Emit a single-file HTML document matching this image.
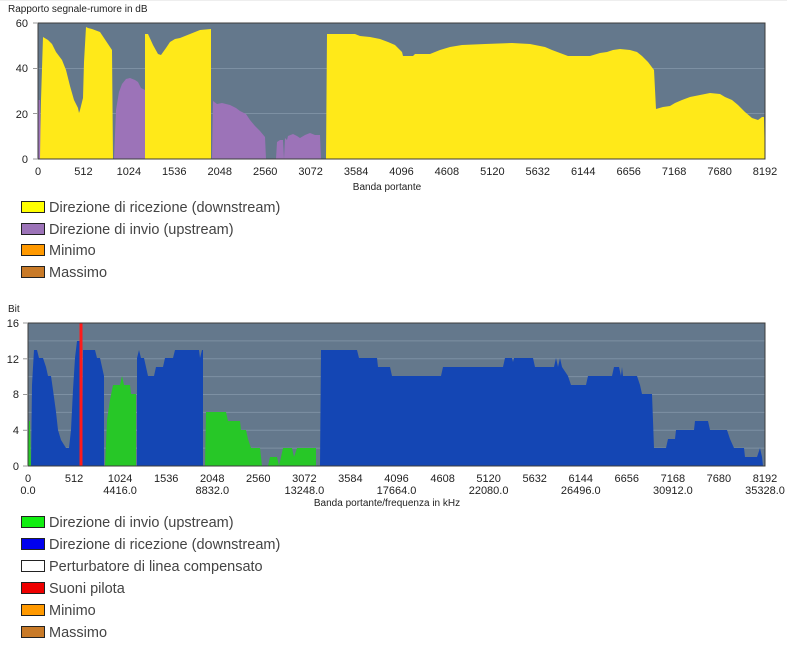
<!DOCTYPE html>
<html><head><meta charset="utf-8"><style>
html,body{margin:0;padding:0;background:#fff;width:787px;height:656px;overflow:hidden}
svg{display:block}
text{font-family:"Liberation Sans",sans-serif;fill:#222}
.ax{font-size:11px}
.lg{font-size:14.5px;fill:#444}
</style></head><body>
<svg width="787" height="656" viewBox="0 0 787 656">
<line x1="0" y1="0.5" x2="787" y2="0.5" stroke="#eee"/>
<text x="8" y="12" style="font-size:10px">Rapporto segnale-rumore in dB</text>
<!-- chart 1 -->
<rect x="38" y="23" width="727" height="136" fill="#64788c"/>
<g stroke="#7d90a3" stroke-width="1"><line x1="38" y1="68.5" x2="765" y2="68.5"/><line x1="38" y1="113.5" x2="765" y2="113.5"/></g>
<polygon fill="#9c73b8" points="38,159 38,100 40,100 41,159"/>
<polygon fill="#ffe919" points="40,159 41,100 43,37 48,40 52,44 56,52 62,60 66,70 70,86 74,100 78,108 79,113 80,110 83,98 84,62 86,27 88,28 92,29 100,32 104,38 108,44 112,50 113,159"/>
<polygon fill="#9c73b8" points="114,159 116,110 119,92 122,84 126,79 130,78 135,80 138,82 141,88 145,90 145,159"/>
<polygon fill="#ffe919" points="145,159 145,34 148,34 153,45 158,54 161,55 166,48 170,42 175,39 180,38 185,36 190,34 195,32 200,30 211,29 211,159"/>
<polygon fill="#9c73b8" points="212,159 213,101 217,104 222,103 230,105 236,108 240,111 246,114 250,120 255,126 260,131 265,137 266,159 268,159 268,159"/>
<polygon fill="#9c73b8" points="276,159 277,142 280,140 283,140 284,159 285,138 287,140 288,136 293,134 297,136 300,138 305,135 310,133 315,135 320,135 321,159"/>
<polygon fill="#ffe919" points="326,159 327,34 355,34 360,36 370,37 380,39 388,42 395,45 402,52 403,56 413,56 415,54 430,54 440,50 450,47 462,45 485,44 512,43 530,44 545,47 552,50 560,53 568,56 590,56 600,53 607,52 613,50 620,49 630,50 637,52 642,56 648,62 654,70 656,109 663,107 670,106 675,103 682,100 690,97 700,95 710,93 720,94 725,97 732,100 738,105 745,112 752,118 758,120 762,117 764,117 765,159"/>
<rect x="38" y="23" width="727" height="136" fill="none" stroke="#3c3c3c" stroke-width="1"/>
<g class="ax" text-anchor="end">
<text x="28" y="27">60</text><text x="28" y="72">40</text><text x="28" y="118">20</text><text x="28" y="163">0</text></g>
<g stroke="#999"><line x1="33" y1="23" x2="38" y2="23"/><line x1="33" y1="68.5" x2="38" y2="68.5"/><line x1="33" y1="113.5" x2="38" y2="113.5"/><line x1="33" y1="159" x2="38" y2="159"/></g>
<g class="ax" text-anchor="middle">
<text x="38" y="175">0</text><text x="83.4" y="175">512</text><text x="128.9" y="175">1024</text><text x="174.3" y="175">1536</text><text x="219.8" y="175">2048</text><text x="265.2" y="175">2560</text><text x="310.6" y="175">3072</text><text x="356.1" y="175">3584</text><text x="401.5" y="175">4096</text><text x="446.9" y="175">4608</text><text x="492.4" y="175">5120</text><text x="537.8" y="175">5632</text><text x="583.3" y="175">6144</text><text x="628.7" y="175">6656</text><text x="674.1" y="175">7168</text><text x="719.6" y="175">7680</text><text x="765" y="175">8192</text>
<text x="387" y="190" style="font-size:10px">Banda portante</text></g>
<!-- legend 1 -->
<g stroke="#222" stroke-width="1">
<rect x="21.5" y="201.5" width="23" height="11" fill="#ffff00"/>
<rect x="21.5" y="223.5" width="23" height="11" fill="#9c73b8"/>
<rect x="21.5" y="244.5" width="23" height="11" fill="#ff9900"/>
<rect x="21.5" y="266.5" width="23" height="11" fill="#c87a28"/></g>
<text class="lg" x="49" y="212">Direzione di ricezione (downstream)</text>
<text class="lg" x="49" y="234">Direzione di invio (upstream)</text>
<text class="lg" x="49" y="255">Minimo</text>
<text class="lg" x="49" y="277">Massimo</text>
<!-- chart 2 -->
<text x="8" y="312" style="font-size:10px">Bit</text>
<rect x="28" y="323" width="737" height="143" fill="#64788c"/>
<g stroke="#7d90a3"><line x1="28" y1="340.9" x2="765" y2="340.9"/><line x1="28" y1="358.8" x2="765" y2="358.8"/><line x1="28" y1="376.6" x2="765" y2="376.6"/><line x1="28" y1="394.5" x2="765" y2="394.5"/><line x1="28" y1="412.4" x2="765" y2="412.4"/><line x1="28" y1="430.3" x2="765" y2="430.3"/><line x1="28" y1="448.1" x2="765" y2="448.1"/></g>
<polygon fill="#27c727" points="28,466 29,421 30,421 31,466"/>
<polygon fill="#1446b4" points="31,466 32,385 34,350 37,350 39,358 43,358 46,367 48,376 51,376 53,390 56,412 58,430 61,440 66,448 69,448 71,430 73,390 75,358 77,341 80,341 80,466"/>
<polygon fill="#1446b4" points="82,466 83,350 95,350 97,358 100,358 102,367 104,376 104,466"/>
<polygon fill="#27c727" points="105,466 107,420 110,400 113,385 120,385 122,376 124,385 130,385 131,394 136,394 136,466"/>
<polygon fill="#1446b4" points="137,466 137,358 139,350 141,358 144,358 146,367 148,376 154,376 156,367 163,367 165,358 173,358 175,350 199,350 200,358 202,350 203,350 203,466"/>
<polygon fill="#27c727" points="205,466 206,412 226,412 228,421 240,421 241,430 246,430 248,439 251,448 260,448 262,466"/>
<polygon fill="#27c727" points="268,466 270,457 277,457 279,466 281,457 283,448 292,448 294,457 297,448 316,448 316,466"/>
<polygon fill="#1446b4" points="320,466 321,350 357,350 359,358 377,358 378,367 390,367 392,376 441,376 443,367 503,367 505,358 512,358 513,362 514,358 533,358 535,367 554,367 556,358 558,367 560,358 562,367 568,376 571,385 586,385 588,376 612,376 614,367 619,367 621,376 622,367 623,376 637,376 640,385 642,394 652,394 654,448 666,448 668,439 675,439 676,430 694,430 695,421 708,421 710,430 727,430 730,439 734,448 744,448 745,457 757,457 760,448 762,457 763,466"/>
<rect x="79.5" y="323" width="3" height="143" fill="#ff1a1a"/>
<rect x="28" y="323" width="737" height="143" fill="none" stroke="#3c3c3c"/>
<g stroke="#999"><line x1="23" y1="323" x2="28" y2="323"/><line x1="23" y1="358.8" x2="28" y2="358.8"/><line x1="23" y1="394.5" x2="28" y2="394.5"/><line x1="23" y1="430.3" x2="28" y2="430.3"/><line x1="23" y1="466" x2="28" y2="466"/></g>
<g class="ax" text-anchor="end">
<text x="19" y="327">16</text><text x="19" y="363">12</text><text x="19" y="398">8</text><text x="19" y="434">4</text><text x="19" y="470">0</text></g>
<g class="ax" text-anchor="middle">
<text x="28" y="482">0</text><text x="74.1" y="482">512</text><text x="120.1" y="482">1024</text><text x="166.2" y="482">1536</text><text x="212.3" y="482">2048</text><text x="258.3" y="482">2560</text><text x="304.4" y="482">3072</text><text x="350.4" y="482">3584</text><text x="396.5" y="482">4096</text><text x="442.6" y="482">4608</text><text x="488.6" y="482">5120</text><text x="534.7" y="482">5632</text><text x="580.8" y="482">6144</text><text x="626.8" y="482">6656</text><text x="672.9" y="482">7168</text><text x="718.9" y="482">7680</text><text x="765" y="482">8192</text>
<text x="28" y="494">0.0</text><text x="120.1" y="494">4416.0</text><text x="212.3" y="494">8832.0</text><text x="304.4" y="494">13248.0</text><text x="396.5" y="494">17664.0</text><text x="488.6" y="494">22080.0</text><text x="580.8" y="494">26496.0</text><text x="672.9" y="494">30912.0</text><text x="765" y="494">35328.0</text>
<text x="387" y="506" style="font-size:10px">Banda portante/frequenza in kHz</text></g>
<!-- legend 2 -->
<g stroke="#222">
<rect x="21.5" y="516.5" width="23" height="11" fill="#11ee11"/>
<rect x="21.5" y="538.5" width="23" height="11" fill="#0000ee"/>
<rect x="21.5" y="560.5" width="23" height="11" fill="#fff"/>
<rect x="21.5" y="582.5" width="23" height="11" fill="#ee0000"/>
<rect x="21.5" y="604.5" width="23" height="11" fill="#ff9900"/>
<rect x="21.5" y="626.5" width="23" height="11" fill="#c87a28"/></g>
<text class="lg" x="49" y="527">Direzione di invio (upstream)</text>
<text class="lg" x="49" y="549">Direzione di ricezione (downstream)</text>
<text class="lg" x="49" y="571">Perturbatore di linea compensato</text>
<text class="lg" x="49" y="593">Suoni pilota</text>
<text class="lg" x="49" y="615">Minimo</text>
<text class="lg" x="49" y="637">Massimo</text>
</svg>
</body></html>
